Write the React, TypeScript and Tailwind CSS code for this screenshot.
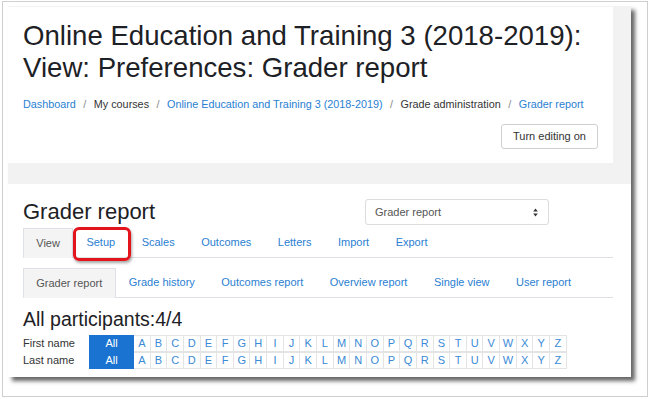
import React from 'react';

const LETTERS = 'ABCDEFGHIJKLMNOPQRSTUVWXYZ'.split('');

const crumbs = [
  { label: 'Dashboard', link: true },
  { label: 'My courses', link: false },
  { label: 'Online Education and Training 3 (2018-2019)', link: true },
  { label: 'Grade administration', link: false },
  { label: 'Grader report', link: true },
];

const topTabs = ['View', 'Setup', 'Scales', 'Outcomes', 'Letters', 'Import', 'Export'];
const subTabs = ['Grader report', 'Grade history', 'Outcomes report', 'Overview report', 'Single view', 'User report'];

// two stacked triangles used by the select box
const SortArrows = () => (
  <svg width="5" height="9" viewBox="0 0 5 9" className="text-[#333]">
    <path d="M2.5 0.5 L4.8 3.6 L0.2 3.6 Z" fill="currentColor" />
    <path d="M2.5 8.5 L4.8 5.4 L0.2 5.4 Z" fill="currentColor" />
  </svg>
);

const Tab = ({ label, active, marked }: { label: string; active: boolean; marked?: boolean }) => (
  <div
    className={
      active
        ? 'relative -mb-px flex h-[30px] items-center border border-b-0 border-[#dee2e6] bg-[#f4f4f4] px-[12.25px] text-[#555]'
        : 'relative flex h-[29px] items-center border border-transparent px-[12.25px] text-[#2a80d2]'
    }
  >
    {label}
    {marked && (
      <span className="pointer-events-none absolute left-[-1px] top-[-2px] h-[34px] w-[58px] rounded-[6px] border-[3px] border-[#e3141b] shadow-[1px_2px_3px_rgba(0,0,0,0.35)]" />
    )}
  </div>
);

const InitialsRow = ({ label }: { label: string }) => (
  <div className="flex h-[17px] items-center">
    <div className="w-[66px] text-[11px] text-[#333]">{label}</div>
    <div className="flex h-full w-[45px] items-center justify-center border border-[#1a73d1] bg-[#1a73d1] text-[11px] text-white">
      All
    </div>
    {LETTERS.map((l) => (
      <div
        key={l}
        className="flex h-full w-[16.65px] items-center justify-center border-y border-r border-[#e4e4e4] text-[11px] text-[#3a8ad6]"
      >
        {l}
      </div>
    ))}
  </div>
);

export default function App() {
  return (
    <div
      className="h-[399px] w-[650px] overflow-hidden bg-white"
      style={{ fontFamily: '"Liberation Sans", Arial, sans-serif' }}
    >
      <div className="ml-[2px] mt-[1px] h-[396px] w-[646px] border border-[#cfcfcf]">
        {/* screenshot */}
        <div className="ml-[5px] mt-[4px] flex h-[371px] w-[623px] flex-col bg-[#f2f2f2] shadow-[4px_4px_4px_rgba(0,0,0,0.6)]">
          {/* page header card */}
          <div className="mt-px w-[605px] bg-white px-[15px] pb-[14px] pt-[13px]">
            <h1 className="text-[27.6px] leading-[32px] text-[#1d2125]">
              Online Education and Training 3 (2018-2019):
              <br />
              View: Preferences: Grader report
            </h1>
            <div className="mt-[12px] flex h-[16px] items-center text-[10.8px]">
              {crumbs.map((c, i) => (
                <React.Fragment key={c.label}>
                  {i > 0 && <span className="px-[7.5px] text-[#888]">/</span>}
                  <span className={c.link ? 'text-[#2a80d2]' : 'text-[#333]'}>{c.label}</span>
                </React.Fragment>
              ))}
            </div>
            <div className="mt-[12px] flex justify-end">
              <button className="h-[25px] rounded-[3px] border border-[#cfcfcf] bg-white px-[11px] text-[11px] text-[#333]">
                Turn editing on
              </button>
            </div>
          </div>

          {/* grader report card */}
          <div className="mt-[21px] flex-1 bg-white pl-[15px] pr-[18px] pt-[15px]">
            <div className="flex h-[26px] items-center">
              <h2 className="w-[342px] text-[22px] leading-[26px] text-[#1d2125]">Grader report</h2>
              <div className="flex h-[26px] w-[184px] items-center justify-between rounded-[3px] border border-[#dcdcdc] pl-[9px] pr-[10px] text-[11px] text-[#555]">
                <span>Grader report</span>
                <SortArrows />
              </div>
            </div>

            <div className="mt-[3px] flex border-b border-[#dee2e6] text-[11px]">
              {topTabs.map((t, i) => (
                <Tab key={t} label={t} active={i === 0} marked={t === 'Setup'} />
              ))}
            </div>

            <div className="mt-[10px] flex border-b border-[#dee2e6] text-[11px]">
              {subTabs.map((t, i) => (
                <Tab key={t} label={t} active={i === 0} />
              ))}
            </div>

            <div className="mt-[10px] text-[19.5px] leading-[22px] text-[#1d2125]">All participants:4/4</div>

            <div className="mt-[5px]">
              <InitialsRow label="First name" />
              <InitialsRow label="Last name" />
            </div>
          </div>
        </div>
      </div>
    </div>
  );
}
